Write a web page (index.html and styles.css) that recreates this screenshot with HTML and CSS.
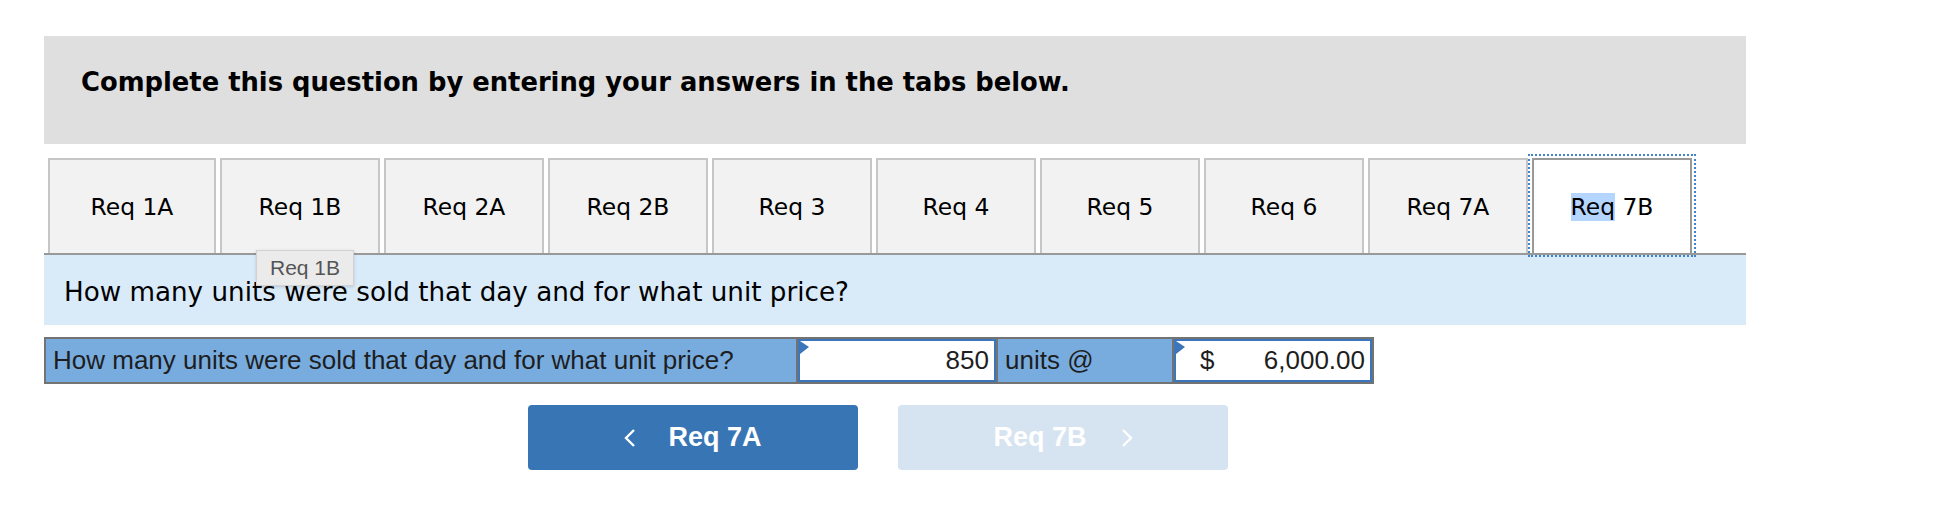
FILE: index.html
```html
<!DOCTYPE html>
<html lang="en">
<head>
  <meta charset="UTF-8" />
  <meta name="viewport" content="width=device-width, initial-scale=1.0"/>
  <title>Req 7B</title>
  <link rel="stylesheet" href="styles.css">
</head>
<body>

  <div class="question-wrap">
    <div class="prompt">
      <h2>Complete this question by entering your answers in the tabs below.</h2>
    </div>

    <!-- TABS -->
    <ul class="tabs">
      <li class="tab tab-first">Req 1A</li>
      <li class="tab">Req 1B</li>
      <li class="tab">Req 2A</li>
      <li class="tab">Req 2B</li>
      <li class="tab">Req 3</li>
      <li class="tab">Req 4</li>
      <li class="tab">Req 5</li>
      <li class="tab">Req 6</li>
      <li class="tab">Req 7A</li>
      <li class="tab active"><span class="selected">Req</span> 7B</li>
    </ul>

    <div class="question">
      How many units were sold that day and for what unit price?
      <span class="tooltip">Req 1B</span>
    </div>

    <div class="answer-row">
      <div class="cell label">How many units were sold that day and for what unit price?</div>
      <div class="cell input"><span class="flag"></span><span class="value">850</span></div>
      <div class="cell label units">units @</div>
      <div class="cell input"><span class="flag"></span><span>$</span><span class="value">6,000.00</span></div>
    </div>

    <div class="nav">
      <button class="nav-btn prev">
        <svg width="12" height="20" viewBox="0 0 12 20"><polyline points="10,2 2,10 10,18" fill="none" stroke="#fff" stroke-width="2.4"/></svg>
        <span>Req 7A</span>
      </button>
      <button class="nav-btn next" disabled>
        <span>Req 7B</span>
        <svg width="12" height="20" viewBox="0 0 12 20"><polyline points="2,2 10,10 2,18" fill="none" stroke="#fff" stroke-width="2.4"/></svg>
      </button>
    </div>
  </div>

</body>
</html>
```

FILE: styles.css
```css
* {
  box-sizing: border-box;
}

body {
  margin: 0;
  padding: 0;
  background-color: #fff;
  color: #000;
  font-family: 'DejaVu Sans', Verdana, sans-serif;
}

.question-wrap {
  margin-left: 44px;
  padding-top: 36px;
  width: 1702px;
}

.prompt {
  background-color: #dfdfdf;
  height: 108px;
  padding: 31px 37px;
}

.prompt h2 {
  margin: 0;
  font-size: 25.8px;
  line-height: 30px;
  font-weight: bold;
}

.tabs {
  list-style: none;
  margin: 14px 0 0 0;
  padding: 0 0 0 4px;
  display: flex;
  gap: 4px;
}

.tab {
  width: 160px;
  height: 95px;
  display: flex;
  justify-content: center;
  align-items: center;
  background-color: #f2f2f2;
  border: 2px solid #c6c6c6;
  border-bottom: none;
  font-size: 23.4px;
  white-space: pre;
}

.tab-first {
  width: 168px;
}

.tab.active {
  background-color: #fff;
  border-color: #999;
  outline: 2px dotted #4384c9;
  outline-offset: 2px;
  position: relative;
  z-index: 1;
}

.selected {
  background-color: #b4d5fe;
}

.question {
  position: relative;
  height: 72px;
  border-top: 2px solid #999;
  background-color: #d9eaf8;
  padding: 22px 20px 0;
  font-size: 26.2px;
  line-height: 30px;
}

.tooltip {
  position: absolute;
  left: 212px;
  top: -5px;
  width: 98px;
  height: 36px;
  background-color: #ebebeb;
  border: 1px solid #d2d2d2;
  box-shadow: 0 1px 3px rgba(0, 0, 0, 0.15);
  color: #555;
  font-family: 'Liberation Sans', Arial, sans-serif;
  font-size: 21px;
  line-height: 34px;
  text-align: center;
}

.answer-row {
  margin-top: 12px;
  display: inline-flex;
  gap: 2px;
  padding: 2px;
  background-color: #737373;
  height: 47px;
  font-family: 'Liberation Sans', Arial, sans-serif;
  font-size: 26px;
  color: #1e1e1e;
}

.cell {
  display: flex;
  align-items: center;
}

.label {
  width: 750px;
  background-color: #78acdf;
  padding-left: 7px;
}

.units {
  width: 174px;
}

.input {
  width: 198px;
  position: relative;
  background-color: #fff;
  border: 2px solid #3b76ba;
  justify-content: space-between;
  padding: 0 5px 0 24px;
}

.input .value {
  margin-left: auto;
}

.flag {
  position: absolute;
  left: 0;
  top: 0;
  width: 0;
  height: 0;
  border-left: 9px solid #3b76ba;
  border-top: 6px solid transparent;
  border-bottom: 7px solid transparent;
}

.nav {
  margin-top: 21px;
  padding-left: 484px;
  display: flex;
  gap: 40px;
}

.nav-btn {
  width: 330px;
  height: 65px;
  border: none;
  border-radius: 4px;
  display: flex;
  justify-content: center;
  align-items: center;
  gap: 32px;
  color: #fff;
  font-family: 'Liberation Sans', Arial, sans-serif;
  font-size: 27px;
  font-weight: bold;
  padding: 0;
}

.nav-btn.prev {
  background-color: #3875b5;
  cursor: pointer;
}

.nav-btn.next {
  background-color: #d6e3f0;
  gap: 34px;
}
```
